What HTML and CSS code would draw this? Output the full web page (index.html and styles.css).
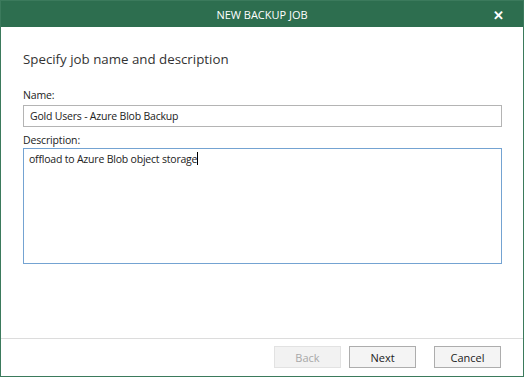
FILE: index.html
```html
<!DOCTYPE html>
<html lang="en">
<head>
    <meta charset="UTF-8">
    <title>New Backup Job</title>
    <link rel="stylesheet" href="styles.css">
</head>
<body>
    <div class="window">
        <div class="titlebar">
            <span class="title">NEW BACKUP JOB</span>
            <span class="close">&#x2715;</span>
        </div>

        <div class="content">
            <h1 class="heading">Specify job name and description</h1>

            <label class="label">Name:</label>
            <div class="input">Gold Users - Azure Blob Backup</div>

            <label class="label">Description:</label>
            <div class="textarea">offload to Azure Blob object storage<span class="caret"></span></div>
        </div>

        <div class="footer">
            <button class="btn disabled">Back</button>
            <button class="btn next">Next</button>
            <button class="btn">Cancel</button>
        </div>
    </div>
</body>
</html>
```

FILE: styles.css
```css
body, html {
    margin: 0;
    background: #ffffff;
    font-family: "Open Sans", "Noto Sans", sans-serif;
    color: #222;
}

.window {
    width: 522px;
    height: 375px;
    border: 1px solid #3b7a5c;
    display: flex;
    flex-direction: column;
    background: #fff;
}

.titlebar {
    height: 26px;
    flex-shrink: 0;
    background-color: #2d6e4f;
    color: #fff;
    display: flex;
    align-items: center;
    justify-content: center;
    position: relative;
    font-size: 11px;
}

.close {
    position: absolute;
    right: 19px;
    top: 5px;
    font-size: 13px;
    font-weight: bold;
}

.content {
    flex: 1;
    display: flex;
    flex-direction: column;
    padding: 0 21px 0 22px;
}

.heading {
    margin: 22px 0 18px 0;
    font-size: 13.3px;
    font-weight: normal;
    line-height: 20px;
    color: #333;
}

.label {
    font-size: 10.5px;
    letter-spacing: -0.15px;
    line-height: 16px;
    color: #222;
}

.input {
    margin: 2px 0 5px 0;
    height: 20px;
    border: 1px solid #b4b4b4;
    font-size: 10.5px;
    letter-spacing: -0.2px;
    line-height: 20px;
    padding: 0 6px;
}

.textarea {
    margin-top: 0;
    height: 112px;
    border: 1px solid #74a3d2;
    font-size: 10.5px;
    letter-spacing: -0.2px;
    line-height: 18px;
    padding: 1px 5px;
}

.caret {
    display: inline-block;
    width: 1px;
    height: 13px;
    background: #000;
    vertical-align: -2px;
}

.footer {
    height: 30px;
    flex-shrink: 0;
    border-top: 1px solid #dcdcdc;
    display: flex;
    justify-content: flex-end;
    align-items: flex-start;
    padding: 7px 22px 0 0;
}

.btn {
    width: 67px;
    height: 22px;
    margin-left: 8px;
    border: 1px solid #adadad;
    background: #f4f4f4;
    font-family: inherit;
    font-size: 11px;
    color: #222;
    padding: 0;
}

.btn.next {
    margin-right: 10px;
}

.btn.disabled {
    color: #a8a8a8;
    border-color: #e2e2e2;
    background: #f2f2f2;
}
```
